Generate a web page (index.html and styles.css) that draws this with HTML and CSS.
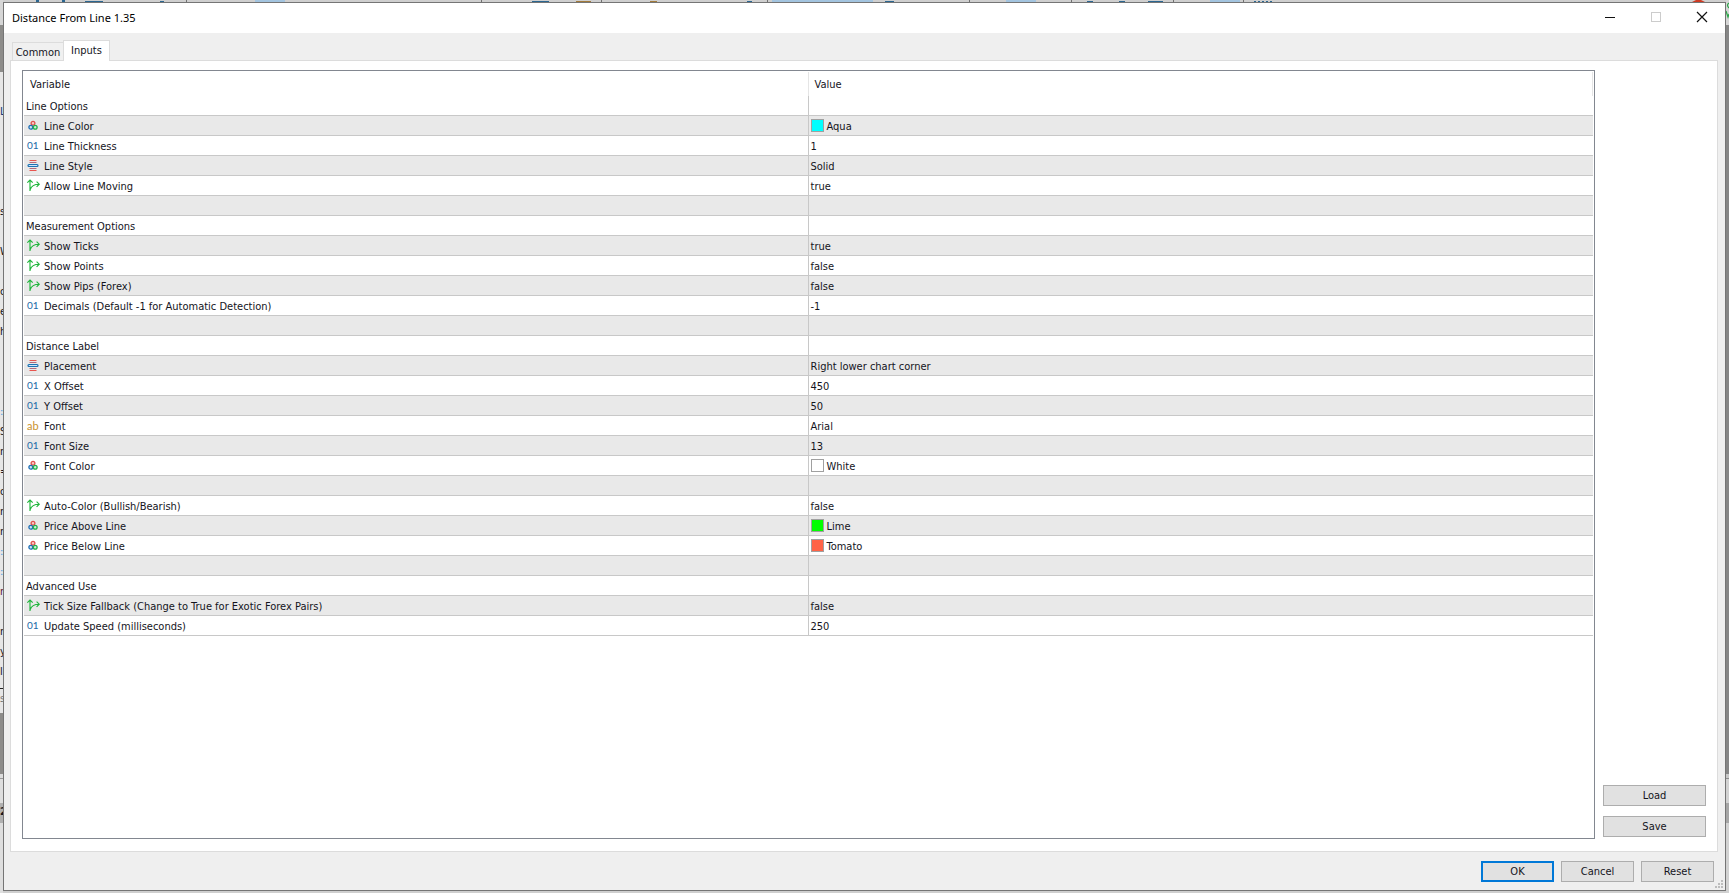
FILE: index.html
```html
<!DOCTYPE html>
<html lang="en">
<head>
<meta charset="utf-8">
<title>Distance From Line 1.35</title>
<link rel="stylesheet" href="styles.css">
</head>
<body>
<svg class="defs" width="0" height="0" aria-hidden="true">
  <symbol id="i-color" viewBox="0 0 13 13">
    <g fill="none" stroke-width="1.3">
      <circle cx="5.500" cy="4.300" r="1.900" stroke="#e0524d" fill="#f6c9c4"/>
      <circle cx="3.300" cy="8.300" r="1.900" stroke="#1f6fb5" fill="#cfe3f4"/>
      <circle cx="7.700" cy="8.300" r="1.900" stroke="#22b14c" fill="#cdeed2"/>
    </g>
  </symbol>
  <symbol id="i-enum" viewBox="0 0 13 13">
    <path d="M2 1.500h7M2 11.500h7" stroke="#e8554f"/>
    <path d="M2 3.500h7M2 9.500h7" stroke="#b0697c"/>
    <rect x="0.500" y="5.500" width="10" height="2" rx="1" fill="#cfe6f7" stroke="#1c72b4" stroke-width="1.200"/>
  </symbol>
  <symbol id="i-bool" viewBox="0 0 14 13">
    <path d="M3 12V1.200M.300 3.700L3 1l2.700 2.700M3.200 10.500C4.500 6.500 7 5.200 12 5.200M9.600 2.600l2.600 2.600L9.600 7.800" fill="none" stroke="#20b53c" stroke-width="1.150"/>
  </symbol>
</svg>

<div class="backdrop" aria-hidden="true">
  <svg class="toolbar" width="100%" height="2">
    <g fill="#a3c4df"><path d="M255 0h30v2h-30zM772 0h101v2h-101zM1006 0h30v2h-30zM1210 0h30v2h-30z"/></g>
    <g fill="#2b6690"><path d="M36 0h3v2h-3zM62 0h3v2h-3zM85 1h18v1h-18zM160 1h4v1h-4zM532 1h17v1h-17zM747 1h5v1h-5zM885 1h9v1h-9zM1087 1h6v1h-6zM1119 1h6v1h-6zM1148 1h15v1h-15zM1254 1h2v1h-2zM1258 1h2v1h-2zM1262 1h2v1h-2zM1266 1h2v1h-2zM1270 1h2v1h-2z"/></g>
    <g fill="#a27a3a"><path d="M576 1h15v1h-15zM650 1h7v1h-7z"/></g>
    <g fill="#707070"><path d="M186 0h1v2h-1zM481 0h1v2h-1zM601 0h1v2h-1zM767 0h1v2h-1zM969 0h1v2h-1zM1071 0h1v2h-1zM1173 0h1v2h-1zM1243 0h1v2h-1z"/></g>
    <path d="M1696 0h5l4 2h-13z" fill="#cf3a22"/>
  </svg>
  <div class="edge edge-left">
    <ul class="tree">
      <li class="navy">L</li><li></li><li></li><li></li><li></li><li>s</li><li></li><li>W</li><li></li><li>c</li>
      <li>e</li><li>h</li><li></li><li></li><li></li><li class="blue">:</li><li>S</li><li>n</li><li>=</li><li>o</li>
      <li>r</li><li>r</li><li class="blue">:</li><li class="blue">:</li><li class="plum">r</li><li></li><li>r</li><li>y</li><li>l</li>
      <li class="status">s</li><li class="total">2</li>
    </ul>
  </div>
  <div class="edge edge-right">
    <svg width="3" height="20"><path d="M3 3Q0 5 3 8M0 11l2 6 1-3" fill="none" stroke="#2aa648" stroke-width="1.200"/></svg>
  </div>
</div>

<main class="window">
  <header class="titlebar">
    <h1>Distance From Line 1.35</h1>
    <div class="caption">
      <button type="button" aria-label="Minimize"><svg width="12" height="12"><path d="M1 6.500h10" stroke="#111"/></svg></button>
      <button type="button" aria-label="Maximize" disabled><svg width="12" height="12"><rect x="1.500" y="1.500" width="9" height="9" fill="none" stroke="#ccc"/></svg></button>
      <button type="button" aria-label="Close"><svg width="12" height="12"><path d="M1 1l10 10M11 1L1 11" stroke="#111" stroke-width="1.200"/></svg></button>
    </div>
  </header>

  <div class="tabs" role="tablist">
    <button type="button" class="tab" role="tab" aria-selected="false">Common</button>
    <button type="button" class="tab active" role="tab" aria-selected="true">Inputs</button>
  </div>

  <section class="panel" role="tabpanel">
    <div class="list">
      <table>
        <thead><tr><th scope="col" class="variable">Variable</th><th scope="col">Value</th></tr></thead>
        <tbody>
          <tr><td class="group">Line Options</td><td></td></tr>
          <tr><td><div class="cell"><svg class="icon"><use href="#i-color"/></svg>Line Color</div></td><td><div class="cell"><span class="swatch aqua"></span>Aqua</div></td></tr>
          <tr><td><div class="cell"><span class="icon num">01</span>Line Thickness</div></td><td>1</td></tr>
          <tr><td><div class="cell"><svg class="icon"><use href="#i-enum"/></svg>Line Style</div></td><td>Solid</td></tr>
          <tr><td><div class="cell"><svg class="icon"><use href="#i-bool"/></svg>Allow Line Moving</div></td><td>true</td></tr>
          <tr><td></td><td></td></tr>
          <tr><td class="group">Measurement Options</td><td></td></tr>
          <tr><td><div class="cell"><svg class="icon"><use href="#i-bool"/></svg>Show Ticks</div></td><td>true</td></tr>
          <tr><td><div class="cell"><svg class="icon"><use href="#i-bool"/></svg>Show Points</div></td><td>false</td></tr>
          <tr><td><div class="cell"><svg class="icon"><use href="#i-bool"/></svg>Show Pips (Forex)</div></td><td>false</td></tr>
          <tr><td><div class="cell"><span class="icon num">01</span>Decimals (Default -1 for Automatic Detection)</div></td><td>-1</td></tr>
          <tr><td></td><td></td></tr>
          <tr><td class="group">Distance Label</td><td></td></tr>
          <tr><td><div class="cell"><svg class="icon"><use href="#i-enum"/></svg>Placement</div></td><td>Right lower chart corner</td></tr>
          <tr><td><div class="cell"><span class="icon num">01</span>X Offset</div></td><td>450</td></tr>
          <tr><td><div class="cell"><span class="icon num">01</span>Y Offset</div></td><td>50</td></tr>
          <tr><td><div class="cell"><span class="icon str">ab</span>Font</div></td><td>Arial</td></tr>
          <tr><td><div class="cell"><span class="icon num">01</span>Font Size</div></td><td>13</td></tr>
          <tr><td><div class="cell"><svg class="icon"><use href="#i-color"/></svg>Font Color</div></td><td><div class="cell"><span class="swatch white"></span>White</div></td></tr>
          <tr><td></td><td></td></tr>
          <tr><td><div class="cell"><svg class="icon"><use href="#i-bool"/></svg>Auto-Color (Bullish/Bearish)</div></td><td>false</td></tr>
          <tr><td><div class="cell"><svg class="icon"><use href="#i-color"/></svg>Price Above Line</div></td><td><div class="cell"><span class="swatch lime"></span>Lime</div></td></tr>
          <tr><td><div class="cell"><svg class="icon"><use href="#i-color"/></svg>Price Below Line</div></td><td><div class="cell"><span class="swatch tomato"></span>Tomato</div></td></tr>
          <tr><td></td><td></td></tr>
          <tr><td class="group">Advanced Use</td><td></td></tr>
          <tr><td><div class="cell"><svg class="icon"><use href="#i-bool"/></svg>Tick Size Fallback (Change to True for Exotic Forex Pairs)</div></td><td>false</td></tr>
          <tr><td><div class="cell"><span class="icon num">01</span>Update Speed (milliseconds)</div></td><td>250</td></tr>
        </tbody>
      </table>
    </div>
    <div class="side">
      <button type="button" class="btn">Load</button>
      <button type="button" class="btn">Save</button>
    </div>
  </section>

  <footer class="footer">
    <button type="button" class="btn primary">OK</button>
    <button type="button" class="btn">Cancel</button>
    <button type="button" class="btn">Reset</button>
  </footer>
  <svg class="grip" width="8" height="8" aria-hidden="true"><path d="M6 0h2v2H6zM3 3h2v2H3zM6 3h2v2H6zM0 6h2v2H0zM3 6h2v2H3zM6 6h2v2H6z" fill="#bdbdbd"/></svg>
</main>
</body>
</html>
```
FILE: styles.css
```css
* {
  box-sizing: border-box;
}

body {
  margin: 0;
  min-height: 100vh;
  padding: 2px 3px;
  display: flex;
  position: relative;
  background: #cfcfcf;
  color: #14141c;
  font: 11px/17px "DejaVu Sans Condensed", "DejaVu Sans", sans-serif;
}

button {
  font: inherit;
  color: inherit;
  border: 0;
  padding: 0;
  background: none;
}

.defs {
  position: absolute;
}

/* Application visible around the dialog */
.backdrop {
  position: absolute;
  inset: 0;
  overflow: hidden;
}

.toolbar {
  display: block;
}

.edge {
  position: absolute;
  top: 0;
  bottom: 0;
  width: 3px;
  overflow: hidden;
}

.edge-left {
  left: 0;
  background: linear-gradient(#d6d6d6 25px, #8d8c8a 25px 72px, #e6e6e6 72px 688px, #222 688px 689px, #e6e6e6 689px 713px, #8d8c8a 713px 774px, #dcdcdc 774px 778px, #999 778px 779px, #dedede 779px 803px, #b0b0b0 803px 823px, #dedede 823px);
}

.edge-right {
  right: 0;
  background: linear-gradient(#d6d6d6 25px, #868686 25px 774px, #c8c8c8 774px 778px, #8c8c8c 778px 779px, #d2d2d2 779px 803px, #a6a6a6 803px 823px, #d2d2d2 823px);
}

.tree {
  list-style: none;
  margin: 102px 0 0;
  padding: 0;
  line-height: 20px;
}

.tree li {
  height: 20px;
}

.tree .status {
  margin-top: 7px;
  color: #777;
}

.tree .total {
  margin-top: 93px;
  font-weight: bold;
}

.navy { color: #123a78; }
.blue { color: #4b9ae0; }
.plum { color: #5c1636; }

/* Dialog */
.window {
  position: relative;
  flex: 1;
  display: flex;
  flex-direction: column;
  background: #efefef;
  border: 1px solid #757575;
}

.titlebar {
  display: flex;
  justify-content: space-between;
  height: 30px;
  background: #fff;
}

.titlebar h1 {
  margin: 0;
  padding-left: 8px;
  font: 11px/29px "Noto Sans", sans-serif;
  color: #000;
}

.caption {
  display: flex;
}

.caption button {
  width: 46px;
  height: 28px;
  display: flex;
  align-items: center;
  justify-content: center;
}

.tabs {
  display: flex;
  align-items: flex-end;
  padding: 7px 8px 0;
}

.tab {
  height: 18px;
  width: 51px;
  padding-top: 1px;
  background: #f0f0f0;
  border: 1px solid #dcdcdc;
  border-width: 1px 0 0 1px;
}

.tab.active {
  position: relative;
  z-index: 1;
  width: 47px;
  height: 21px;
  margin-bottom: -1px;
  padding: 0 0 2px;
  background: #fff;
  border-width: 1px 1px 0;
}

.panel {
  flex: 1;
  display: flex;
  gap: 8px;
  margin: 0 7px 0 6px;
  padding: 9px 11px 12px;
  background: #fff;
  border: 1px solid #dcdcdc;
}

.list {
  flex: 1;
  padding: 1px;
  border: 1px solid #828790;
}

table {
  width: 100%;
  table-layout: fixed;
  border-spacing: 0;
}

th,
td {
  padding: 2px 3px 0 2px;
  text-align: left;
  font-weight: normal;
  white-space: nowrap;
}

th {
  height: 24px;
  padding: 0 6px;
  border-right: 1px solid #e5e5e5;
}

.variable {
  width: 50%;
}

td {
  height: 20px;
  border-bottom: 1px solid #c8c8c8;
}

td:first-child {
  padding-left: 3px;
  border-right: 1px solid #c8c8c8;
}

td.group:first-child {
  padding-left: 2px;
}

tbody tr:nth-child(even) {
  background: #e9e9e9;
}

.cell {
  display: flex;
  align-items: center;
}

.icon {
  flex: none;
  width: 14px;
  height: 13px;
  margin: -2px 3px 0 0;
}

.num,
.str {
  font: 10px/13px Lato, sans-serif;
}

.num { color: #1c6aa6; }
.str { color: #c9922e; font-size: 11px; }

.swatch {
  width: 13px;
  height: 13px;
  margin: -2px 3px 0 0;
  border: 1px solid #a0a0a0;
}

.aqua { background: #00ffff; }
.white { background: #ffffff; }
.lime { background: #00ff00; }
.tomato { background: #ff6347; }

.side {
  display: flex;
  flex-direction: column;
  justify-content: flex-end;
  gap: 10px;
  padding-bottom: 2px;
}

.btn {
  width: 73px;
  height: 21px;
  background: #e1e1e1;
  border: 1px solid #adadad;
}

.side .btn {
  width: 103px;
}

.btn.primary {
  border: 2px solid #0078d7;
}

.footer {
  display: flex;
  justify-content: flex-end;
  gap: 7px;
  padding: 9px 11px 8px;
}

.grip {
  position: absolute;
  right: 2px;
  bottom: 2px;
}
```
